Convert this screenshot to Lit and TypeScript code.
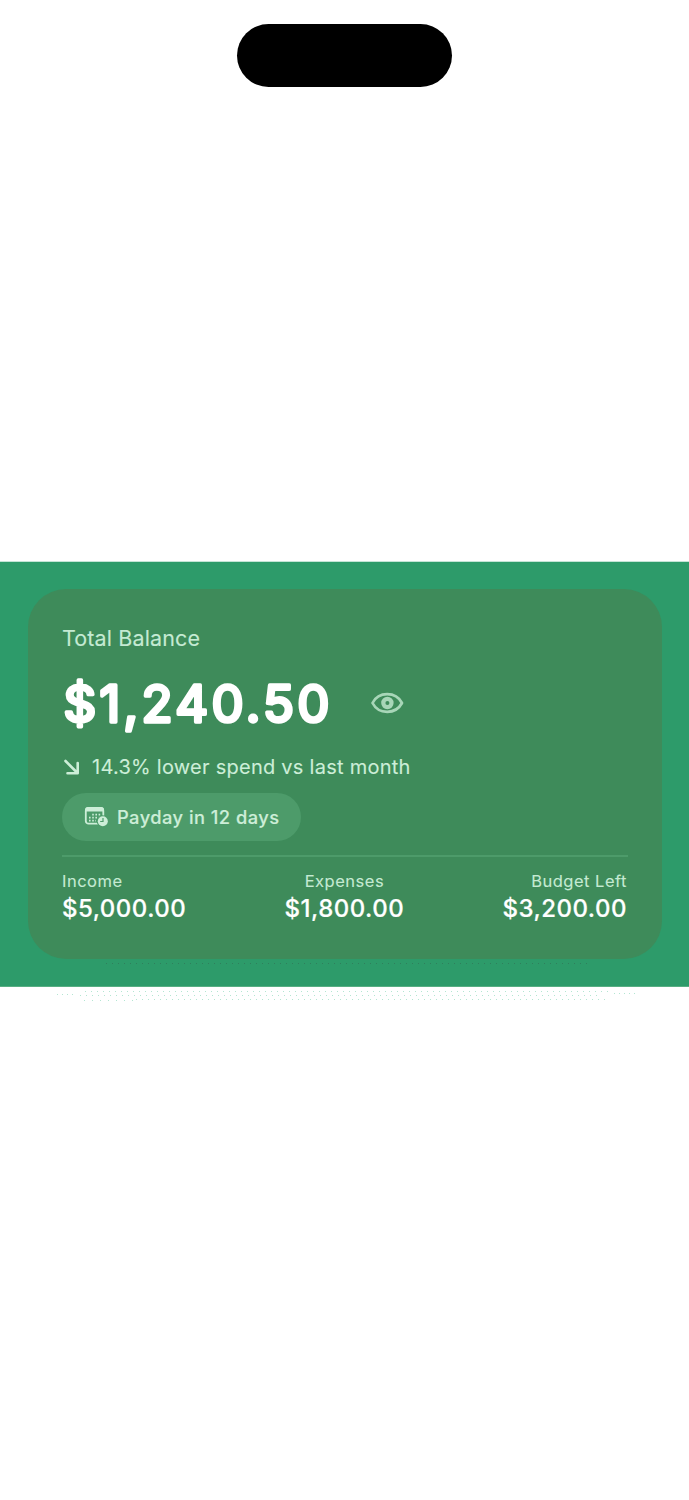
import { LitElement, html, css, svg } from "lit";
import { customElement } from "lit/decorators.js";

const dotRow = (from: number, to: number, y: number, step = 6) => {
  const dots = [];
  for (let x = from; x <= to; x += step) {
    dots.push(svg`<rect x=${x} y=${y} width="1" height="1"></rect>`);
  }
  return dots;
};

@customElement("app-root")
export class AppRoot extends LitElement {
  static styles = css`
    :host {
      display: block;
      height: 1500px;
      background: #fff;
      overflow: hidden;
      font-family: Inter, "Liberation Sans", sans-serif;
      color: #fff;
    }
    * { box-sizing: border-box; }
    .screen { display: flex; flex-direction: column; align-items: center; }
    .island {
      width: 215px;
      height: 63px;
      margin-top: 24px;
      border-radius: 32px;
      background: #000;
    }
    .band {
      width: 100%;
      height: 426px;
      margin-top: 474px;
      padding: 27px 27px 0 28px;
      background: #2d9b6a;
      border-top: 1px solid #c4e4d6;
      border-bottom: 1px solid #58ae83;
    }
    .card {
      height: 370px;
      padding: 35px 34px 0;
      border-radius: 38px;
      background: #3e8b5a;
    }
    .title { height: 28px; line-height: 28px; font-size: 21.5px; letter-spacing: 0.13px; color: #c5ead3; white-space: nowrap; -webkit-text-stroke: 0.1px #c5ead3; }
    .balance { display: flex; align-items: center; height: 60px; margin-top: 21px; }
    .amount { display: block; width: 270px; height: 60px; overflow: visible; flex: none; }
    .amount text {
      font: 400 51px Inter, "Liberation Sans", sans-serif;
      fill: #fff;
      stroke: #fff;
      stroke-width: 3.5px;
      stroke-linejoin: round;
    }
    .eye { margin-left: 38px; flex: none; }
    .trend { display: flex; align-items: center; height: 28px; margin-top: 20px; font-size: 20px; letter-spacing: 0.26px; color: #cdeed8; white-space: nowrap; -webkit-text-stroke: 0.1px #cdeed8; }
    .arrow { margin: 0 11px 0 1px; flex: none; }
    .pill { display: flex; align-items: center; width: 239px; height: 48px; margin-top: 12px; padding-left: 22px; border-radius: 24px; background: #4d9b6a; color: #cdeed8; font-size: 18.3px; font-weight: 500; letter-spacing: 0.46px; white-space: nowrap; -webkit-text-stroke: 0.15px #cdeed8; }
    .calendar { margin-right: 8px; flex: none; }
    .divider { width: 566px; height: 2px; margin-top: 14px; background: #4d9b6a; }
    .stats { display: flex; justify-content: space-between; margin-top: 12px; width: 565px; white-space: nowrap; }
    .stat { display: flex; flex-direction: column; }
    .center { align-items: center; }
    .end { align-items: flex-end; }
    .label { height: 24px; line-height: 24px; font-size: 16.5px; letter-spacing: 0.5px; color: #c5ead3; -webkit-text-stroke: 0.1px #c5ead3; }
    .value { height: 32px; line-height: 32px; font-size: 24px; font-weight: 500; letter-spacing: 0.5px; -webkit-text-stroke: 0.2px #fff; }
    .cast { display: block; width: 634px; height: 16px; }
    .speckle { fill: #2f7f5c; }
    .mint { fill: #b4e6d2; }
  `;

  render() {
    return html`
      <div class="screen">
        <div class="island"></div>
        <section class="band">
          <div class="card">
            <div class="title">Total Balance</div>
            <div class="balance">
              <svg class="amount" viewBox="0 0 270 60">
                <text x="1.500" y="48.800" textLength="266" lengthAdjust="spacing">$1,240.50</text>
              </svg>
              <svg class="eye" width="34" height="24" viewBox="0 0 34 24" fill="none" stroke="#a8d6b8">
                <path d="M2.500 12C5.500 6.200 10.600 3.200 17.200 3.200S28.900 6.200 32 12C28.900 17.800 23.800 20.800 17.200 20.800S5.500 17.800 2.500 12Z" stroke-width="2.700" stroke-linejoin="round"></path>
                <circle cx="17.400" cy="12" r="4.100" stroke-width="4.200"></circle>
              </svg>
            </div>
            <div class="trend">
              <svg class="arrow" width="18" height="18" viewBox="0 0 18 18" fill="none" stroke="#cdeed8" stroke-width="2.6" stroke-linecap="round" stroke-linejoin="round">
                <path d="M2.500 3L14.500 15M4.500 15.300H14.700V5"></path>
              </svg>
              <span>14.3% lower spend vs last month</span>
            </div>
            <div class="pill">
              <svg class="calendar" width="25" height="22" viewBox="0 0 25 22">
                <rect x="1.800" y="1.900" width="17.500" height="15.800" rx="2.800" fill="none" stroke="#cdeed8" stroke-width="1.800"></rect>
                <path d="M1 5.500V4Q1 1 4 1H17Q20 1 20 4V5.500Z" fill="#cdeed8"></path>
                <path d="M8.200 8.600H16.800M5 11.600H16.800M5 14.600H12" stroke="#cdeed8" stroke-width="1.600" stroke-dasharray="1.600 1.600"></path>
                <circle cx="18.800" cy="15.200" r="6" fill="#4d9b6a"></circle>
                <circle cx="18.800" cy="15.200" r="5" fill="#cdeed8"></circle>
                <path d="M19 12V15.500H16.200" fill="none" stroke="#4d9b6a" stroke-width="1.200"></path>
              </svg>
              <span>Payday in 12 days</span>
            </div>
            <div class="divider"></div>
            <div class="stats">
              <div class="stat"><span class="label">Income</span><span class="value">$5,000.00</span></div>
              <div class="stat center"><span class="label">Expenses</span><span class="value">$1,800.00</span></div>
              <div class="stat end"><span class="label">Budget Left</span><span class="value">$3,200.00</span></div>
            </div>
          </div>
          <svg class="cast" viewBox="28 959 634 16">
            <g class="speckle">${dotRow(106, 586, 963)}</g>
          </svg>
        </section>
        <svg class="cast" viewBox="28 987 634 16">
          <g class="mint">
            ${dotRow(85, 610, 991)}${dotRow(57, 75, 994, 5)}${dotRow(80, 600, 995)}${dotRow(614, 634, 993, 5)}${dotRow(84, 132, 1000, 8)}${dotRow(136, 608, 999)}
          </g>
        </svg>
      </div>
    `;
  }
}
